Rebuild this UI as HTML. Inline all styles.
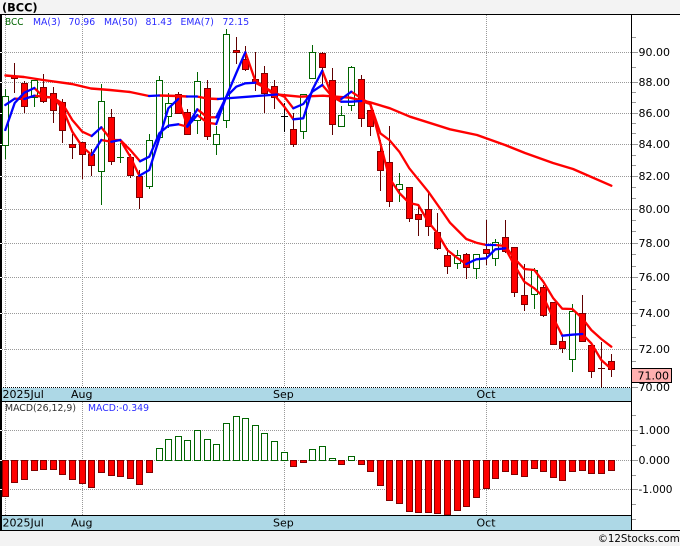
<!DOCTYPE html>
<html><head><meta charset="utf-8"><title>BCC</title>
<style>
html,body{margin:0;padding:0;background:#f3f3f3;width:680px;height:546px;overflow:hidden}
svg{display:block}
text{font-family:"DejaVu Sans",sans-serif}
</style></head><body>
<svg width="680" height="546" viewBox="0 0 680 546" xmlns="http://www.w3.org/2000/svg">
<rect width="680" height="546" fill="#f3f3f3"/>
<rect x="0" y="14" width="680" height="517" fill="#fff"/>
<text x="2" y="11.5" font-size="11.3" font-weight="bold" fill="#000">(BCC)</text>

<!-- grid -->
<g stroke="#999" stroke-width="1" stroke-dasharray="1 1" fill="none" shape-rendering="crispEdges">
<path d="M2 52.5H631M2 82.5H631M2 113.5H631M2 144.5H631M2 176.5H631M2 209.5H631M2 243.5H631M2 277.5H631M2 313.5H631M2 349.5H631M2 430.5H631M2 460.5H631M2 489.5H631"/>
<path d="M5.5 15V387M82.5 15V387M284.5 15V387M486.5 15V387M5.5 402V515M82.5 402V515M284.5 402V515M486.5 402V515"/>
</g>

<!-- wicks -->
<g fill="none" stroke-width="1" shape-rendering="crispEdges">
<path stroke="#600000" d="M14.5 63V93M24.5 81V113M43.5 74V103M53.5 87V123M62.5 99V143M72.5 134V159M82.5 142V179M91.5 149V176M111.5 109V165M130.5 154V178M139.5 170V209M178.5 92V113M187.5 109V134M207.5 80V140M236.5 37V64M245.5 46V71M255.5 52V91M264.5 66V113M274.5 80V109M293.5 113V147M322.5 52V85M332.5 68V135M361.5 75V127M370.5 110V136M380.5 140V191M389.5 126V207M409.5 187V222M418.5 204V236M428.5 192V236M437.5 213V250M447.5 248V274M466.5 253V279M486.5 220V265M505.5 220V253M514.5 247V297M524.5 264V311M543.5 285V317M553.5 302V345M562.5 337V353M582.5 295V342M591.5 345V378M611.5 354V377M601.5 342V387M598 368.5H605"/>
<path stroke="#006400" d="M5.5 89V159M34.5 80V107M101.5 84V205M120.5 143V163M117 157.5H124M149.5 134V189M159.5 76V137M168.5 93V128M197.5 72V134M216.5 126V155M226.5 29V128M303.5 94V139M312.5 45V78M341.5 106V127M351.5 66V111M399.5 173V202M457.5 250V269M476.5 254V279M495.5 239V266M534.5 268V309M572.5 304V372"/>
<path stroke="#000" d="M284.5 103V132M281 116.5H288"/>
</g>

<!-- bodies -->
<g stroke-width="1" shape-rendering="crispEdges">
<path fill="#fff" stroke="#006400" d="M2.5 96.5h6V145.5h-6zM31.5 80.5h6V97.5h-6zM98.5 101.5h6V171.5h-6zM146.5 140.5h6V186.5h-6zM156.5 80.5h6V137.5h-6zM165.5 103.5h6V116.5h-6zM194.5 81.5h6V120.5h-6zM213.5 134.5h6V144.5h-6zM223.5 34.5h6V120.5h-6zM300.5 94.5h6V131.5h-6zM309.5 52.5h6V78.5h-6zM338.5 115.5h6V126.5h-6zM348.5 67.5h6V105.5h-6zM396.5 184.5h6V189.5h-6zM454.5 255.5h6V263.5h-6zM473.5 254.5h6V268.5h-6zM492.5 242.5h6V258.5h-6zM531.5 270.5h6V294.5h-6zM569.5 311.5h6V359.5h-6z"/>
<path fill="#f00" stroke="#800000" d="M11.5 76.5h6V78.5h-6zM21.5 83.5h6V106.5h-6zM40.5 87.5h6V101.5h-6zM50.5 93.5h6V110.5h-6zM59.5 102.5h6V130.5h-6zM69.5 144.5h6V147.5h-6zM79.5 142.5h6V154.5h-6zM88.5 154.5h6V165.5h-6zM108.5 117.5h6V161.5h-6zM127.5 157.5h6V175.5h-6zM136.5 176.5h6V197.5h-6zM175.5 94.5h6V113.5h-6zM184.5 112.5h6V134.5h-6zM204.5 88.5h6V136.5h-6zM233.5 50.5h6V52.5h-6zM242.5 59.5h6V69.5h-6zM252.5 79.5h6V82.5h-6zM261.5 73.5h6V93.5h-6zM271.5 86.5h6V97.5h-6zM290.5 129.5h6V144.5h-6zM319.5 53.5h6V67.5h-6zM329.5 80.5h6V124.5h-6zM358.5 79.5h6V118.5h-6zM367.5 110.5h6V126.5h-6zM377.5 151.5h6V170.5h-6zM386.5 162.5h6V201.5h-6zM406.5 187.5h6V218.5h-6zM415.5 214.5h6V219.5h-6zM425.5 209.5h6V226.5h-6zM434.5 232.5h6V248.5h-6zM444.5 255.5h6V266.5h-6zM463.5 254.5h6V267.5h-6zM483.5 249.5h6V253.5h-6zM502.5 237.5h6V251.5h-6zM511.5 247.5h6V292.5h-6zM521.5 295.5h6V304.5h-6zM540.5 287.5h6V315.5h-6zM550.5 302.5h6V344.5h-6zM559.5 341.5h6V348.5h-6zM579.5 313.5h6V341.5h-6zM588.5 345.5h6V371.5h-6zM608.5 361.5h6V369.5h-6z"/>
</g>

<!-- moving averages -->
<g fill="none" stroke-width="2.3" stroke-linejoin="round" stroke-linecap="round">
<g stroke="#f00">
<!-- MA50 -->
<path stroke-width="2.4" d="M5.5 75.5L24 77L43 80L72 84L91 88.5L110 90L130 92L149 96M159 95.5L178 96L187 96.5M197 96.5L207 98.5L218 99M277 94.5L300 96.7L323 95.7L350 97.7L370 102.3L390 108.3L410 116.7L450 129.3L477 135L505 145L525 153L553 163L573 169L611.3 185.7"/>
<!-- MA3 -->
<path d="M34.3 88L43.3 96.7L53.3 97.7L62.3 108L72.3 131.7L82.3 146.7L91.7 155M101.3 140L111.3 141.7M120.3 140L130.3 156.7L139.3 175.7M178.3 99L187.3 126M197.3 109.3L207.3 117.3L216.3 117.3M245.3 52.3L255.3 80.7L264.3 86.7L274.3 95L284.3 106.7L293.3 119.3M322.3 70.7L332.3 96.7L341.3 101.7M361.3 101L370.3 104L380.3 143L389.3 178L399.3 193L409.3 203L418.3 205L428.3 222L437.3 233L447.3 250L457.3 258L466.3 264M505.3 248.3L514.3 265L524.3 281.7L534.3 288.3L543.3 296.7L553.3 318L562.3 335.7M582.3 334L591.3 343.3L601.3 360L611.3 369"/>
<!-- EMA7 -->
<path d="M14.7 98.7L24.3 99M34.3 95.7L43.3 96.7L53.3 97.7L62.3 103.3L72.3 120L82.3 131.7L91.7 136M101.3 127.3L111.3 140L120.3 140L130.3 150L140 161.3M178.3 124.3L187.3 126.7M197.3 115L207.3 122.7L216.3 124M255.3 82.7L264.3 87.3L274.3 92.7L284.3 96.7L293.3 108.3M322.3 85L332.3 96.7L341.3 99M351.3 91.7L361.3 98.3L370.3 104L380.3 133.3L389.3 140L399.3 151.7L409.3 168.3L428.3 191.7L443.3 213L450 222.7L457.3 230L466.3 239L476.3 242.7L486.3 245M495.3 245L505.3 246L514.3 258.3L524.3 269L534.3 270L543.3 281.7L553.3 298.3L562.3 308.7L572.3 309L582.3 318.3L591.3 330L601.3 339L611.3 346.7"/>
</g>
<g stroke="#00f">
<path d="M149 96L159 95.5M187 96.5L197 96.5M218 99L277 94.5"/>
<path d="M5.3 130L14.7 103L24.3 92.7L34.3 88M91.7 155L101.3 140M111.3 141.7L120.3 140M139.3 175.7L149.3 170L159.3 138.3L168.3 108.3L178.3 99M187.3 126L197.3 109.3M216.3 117.3L226.3 96.7L236.3 73L245.3 52.3M293.3 119.3L303.3 118.3L312.3 90L322.3 70.7M341.3 101.7L351.3 101.7L361.3 101M466.3 264L476.3 259.3L486.3 258.3L495.3 249.3L505.3 248.3M562.3 335.7L572.3 334.7L582.3 334"/>
<path d="M5.3 105L14.7 98.7M24.3 99L34.3 95.7M91.7 136L101.3 127.3M140 161.3L149.3 156.7L159.3 133.3L168.3 125.7L178.3 124.3M187.3 126.7L197.3 115M216.3 124L226.3 96.7L236.3 86.7L245.3 83.3L255.3 82.7M293.3 108.3L303.3 104L312.3 91.7L322.3 85M341.3 99L351.3 91.7M486.3 245L495.3 245"/>
</g>
</g>

<!-- legend -->
<g font-size="9.3">
<text x="5" y="25" fill="#006400" textLength="18.5" lengthAdjust="spacingAndGlyphs">BCC</text>
<text x="33" y="25" fill="#2a2aff">MA(3)</text>
<text x="68.5" y="25" fill="#2a2aff">70.96</text>
<text x="104" y="25" fill="#2a2aff">MA(50)</text>
<text x="145.5" y="25" fill="#2a2aff">81.43</text>
<text x="180.5" y="25" fill="#2a2aff">EMA(7)</text>
<text x="222.5" y="25" fill="#2a2aff">72.15</text>
<text x="5" y="411" fill="#303030" textLength="71" lengthAdjust="spacingAndGlyphs">MACD(26,12,9)</text>
<text x="88" y="411" fill="#2a2aff" textLength="61" lengthAdjust="spacingAndGlyphs">MACD:-0.349</text>
</g>

<!-- MACD bars -->
<g stroke-width="1" shape-rendering="crispEdges">
<path fill="#f00" stroke="#800000" d="M2.5 460.5h6V496.5h-6zM11.5 460.5h6V482.5h-6zM21.5 460.5h6V479.5h-6zM31.5 460.5h6V470.5h-6zM40.5 460.5h6V469.5h-6zM50.5 460.5h6V469.5h-6zM59.5 460.5h6V474.5h-6zM69.5 460.5h6V479.5h-6zM79.5 460.5h6V483.5h-6zM88.5 460.5h6V487.5h-6zM98.5 460.5h6V472.5h-6zM108.5 460.5h6V475.5h-6zM117.5 460.5h6V476.5h-6zM127.5 460.5h6V478.5h-6zM136.5 460.5h6V484.5h-6zM146.5 460.5h6V472.5h-6zM290.5 460.5h6V466.5h-6zM300.5 460.5h6V462.5h-6zM338.5 460.5h6V464.5h-6zM358.5 460.5h6V464.5h-6zM367.5 460.5h6V471.5h-6zM377.5 460.5h6V485.5h-6zM386.5 460.5h6V500.5h-6zM396.5 460.5h6V503.5h-6zM406.5 460.5h6V511.5h-6zM415.5 460.5h6V512.5h-6zM425.5 460.5h6V512.5h-6zM434.5 460.5h6V513.5h-6zM444.5 460.5h6V515h-6zM454.5 460.5h6V510.5h-6zM463.5 460.5h6V506.5h-6zM473.5 460.5h6V497.5h-6zM483.5 460.5h6V488.5h-6zM492.5 460.5h6V478.5h-6zM502.5 460.5h6V471.5h-6zM511.5 460.5h6V474.5h-6zM521.5 460.5h6V476.5h-6zM531.5 460.5h6V468.5h-6zM540.5 460.5h6V471.5h-6zM550.5 460.5h6V477.5h-6zM559.5 460.5h6V480.5h-6zM569.5 460.5h6V471.5h-6zM579.5 460.5h6V470.5h-6zM588.5 460.5h6V473.5h-6zM598.5 460.5h6V473.5h-6zM608.5 460.5h6V470.5h-6z"/>
<path fill="#fff" stroke="#006400" d="M156.5 448.5h6V460.5h-6zM165.5 439.5h6V460.5h-6zM175.5 436.5h6V460.5h-6zM184.5 440.5h6V460.5h-6zM194.5 430.5h6V460.5h-6zM204.5 439.5h6V460.5h-6zM213.5 444.5h6V460.5h-6zM223.5 423.5h6V460.5h-6zM233.5 416.5h6V460.5h-6zM242.5 418.5h6V460.5h-6zM252.5 425.5h6V460.5h-6zM261.5 433.5h6V460.5h-6zM271.5 441.5h6V460.5h-6zM281.5 452.5h6V460.5h-6zM309.5 449.5h6V460.5h-6zM319.5 446.5h6V460.5h-6zM329.5 458.5h6V460.5h-6zM348.5 456.5h6V460.5h-6z"/>
</g>

<!-- date bands -->
<rect x="1" y="388" width="630" height="13" fill="#add8e6"/>
<rect x="1" y="516" width="630" height="14" fill="#add8e6"/>
<g stroke-width="1" shape-rendering="crispEdges" fill="none">
<path stroke="#000" stroke-dasharray="1 1" d="M1 387.5H631"/>
<path stroke="#000" d="M1 401.5H631M1 515.5H631M0 530.5H680M0 14.5H680M631.5 14V531"/>
<path stroke="#000" stroke-width="2" d="M1 14V531"/>
<path stroke="#fff" d="M0 52.5H2M0 82.5H2M0 113.5H2M0 144.5H2M0 176.5H2M0 209.5H2M0 243.5H2M0 277.5H2M0 313.5H2M0 349.5H2M0 430.5H2M0 460.5H2M0 489.5H2"/>
<path stroke="#999" d="M632 52.5H638M632 82.5H638M632 113.5H638M632 144.5H638M632 176.5H638M632 209.5H638M632 243.5H638M632 277.5H638M632 313.5H638M632 349.5H638M632 387.5H638M632 430.5H638M632 460.5H638M632 489.5H638"/>
<path stroke="#999" d="M632 37.5H636M632 67.5H636M632 92.5H636M632 102.5H636M632 123.5H636M632 133.5H636M632 155.5H636M632 165.5H636M632 187.5H636M632 198.5H636M632 220.5H636M632 231.5H636M632 254.5H636M632 266.5H636M632 289.5H636M632 301.5H636M632 325.5H636M632 337.5H636M632 361.5H636M632 415.5H636M632 445.5H636M632 475.5H636M632 504.5H636M632 519.5H636"/>
</g>
<g font-size="11" fill="#000">
<text x="2.5" y="398">2025Jul</text>
<text x="71" y="398">Aug</text>
<text x="273" y="398">Sep</text>
<text x="476.5" y="398">Oct</text>
<text x="2.5" y="526.5">2025Jul</text>
<text x="71" y="526.5">Aug</text>
<text x="273" y="526.5">Sep</text>
<text x="476.5" y="526.5">Oct</text>
</g>

<!-- axis labels -->
<g font-size="11" fill="#000">
<text x="638.5" y="56">90.00</text>
<text x="638.5" y="86">88.00</text>
<text x="638.5" y="117">86.00</text>
<text x="638.5" y="148">84.00</text>
<text x="638.5" y="180">82.00</text>
<text x="638.5" y="213">80.00</text>
<text x="638.5" y="247">78.00</text>
<text x="638.5" y="281">76.00</text>
<text x="638.5" y="317">74.00</text>
<text x="638.5" y="353">72.00</text>
<text x="638.5" y="391">70.00</text>
<rect x="631.5" y="368.5" width="40" height="14" fill="#ffb0b0" stroke="#000" stroke-width="1" shape-rendering="crispEdges"/>
<text x="637.5" y="379.5">71.00</text>
<text x="638.5" y="434">1.000</text>
<text x="638.5" y="464">0.000</text>
<text x="638.5" y="493" textLength="34" lengthAdjust="spacingAndGlyphs">-1.000</text>
<text x="597.7" y="542" font-size="11" fill="#000" textLength="82" lengthAdjust="spacingAndGlyphs">©12Stocks.com</text>
</g>
</svg>
</body></html>
